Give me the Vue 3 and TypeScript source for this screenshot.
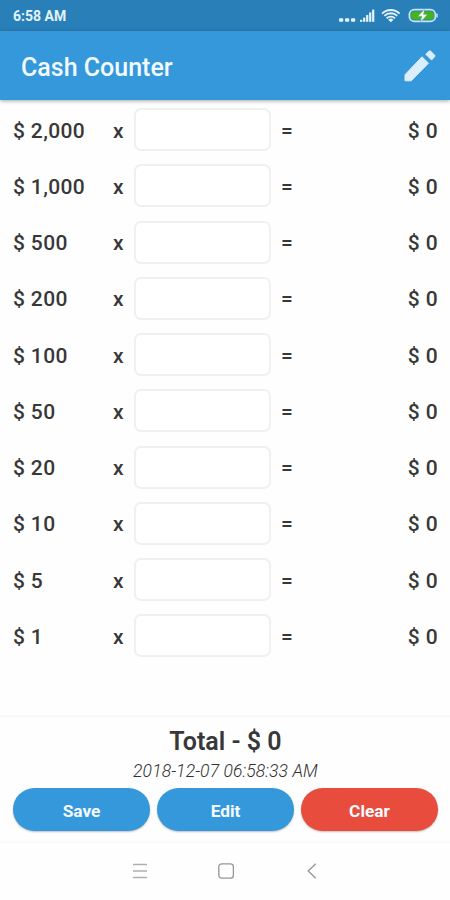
<script setup lang="ts">
import { computed, reactive, ref } from 'vue'

interface Row {
  value: number
  count: string
}

const rows = reactive<Row[]>(
  [2000, 1000, 500, 200, 100, 50, 20, 10, 5, 1].map((value) => ({ value, count: '' })),
)
const stamp = ref('2018-12-07 06:58:33 AM')

const money = (n: number): string => '$ ' + n.toLocaleString('en-US')
const amount = (row: Row): number => row.value * (Number(row.count) || 0)
const total = computed(() => rows.reduce((sum, row) => sum + amount(row), 0))

function clear(): void {
  rows.forEach((row) => {
    row.count = ''
  })
}
</script>

<template>
  <div class="screen">
    <div class="status">
      <span class="clock">6:58 AM</span>
      <svg class="indicators" width="99" height="20" viewBox="0 0 99 20">
        <g fill="#e4f2fb">
          <rect x="0" y="11.2" width="4.2" height="3.6" rx="1" />
          <rect x="6" y="11.2" width="4.2" height="3.6" rx="1" />
          <rect x="12" y="11.2" width="4.2" height="3.6" rx="1" />
          <rect x="21" y="12.8" width="2.3" height="2" />
          <rect x="24.1" y="10.6" width="2.2" height="4.2" />
          <rect x="27.1" y="8" width="2.2" height="6.8" />
          <rect x="30.1" y="5.4" width="2.2" height="9.4" />
          <rect x="33.1" y="2.6" width="2.2" height="12.2" />
          <path d="M49.2 12.8a3.6 3.6 0 0 1 5.2 0l-2.6 2.4z" />
        </g>
        <g fill="none" stroke="#e4f2fb" stroke-width="1.8">
          <path d="M43 6.6a12.5 12.5 0 0 1 17.6 0" />
          <path d="M45.4 8.9a9 9 0 0 1 12.8 0" />
          <path d="M47.6 11.3a6 6 0 0 1 8.4 0" />
        </g>
        <rect x="70.4" y="2.6" width="26" height="11.8" rx="5" fill="none" stroke="#c9e2f1" stroke-width="1.8" />
        <path d="M98 6.5v4" stroke="#c9e2f1" stroke-width="1.4" />
        <rect x="72" y="4.4" width="22.8" height="8.2" rx="3" fill="#45b51c" />
        <path d="M85.5 2.2l-6.5 7h3.8l-1.4 6 6.9-7.6h-3.8z" fill="#fff" stroke="#5fae94" stroke-width=".5" />
      </svg>
    </div>

    <header class="bar">
      <h1>Cash Counter</h1>
      <svg width="32" height="32" viewBox="0 0 32 32" fill="#dcedfb" stroke="#dcedfb" stroke-width="1" stroke-linejoin="round">
        <path d="M1 24.7L18 6.8l6.5 6.4L7.2 30.8H1z" />
        <path d="M21.8 4.3L25.3 1q.7-.5 1.3.1l4.1 4.2q.6.7 0 1.3l-3.1 3.5z" />
      </svg>
    </header>

    <main class="list">
      <div v-for="row in rows" :key="row.value" class="row">
        <span class="note">{{ money(row.value) }}</span>
        <span class="sign">x</span>
        <input v-model="row.count" class="count" inputmode="numeric" />
        <span class="equals">=</span>
        <span class="sum">{{ money(amount(row)) }}</span>
      </div>
    </main>

    <footer class="summary">
      <div class="total">Total - {{ money(total) }}</div>
      <div class="stamp">{{ stamp }}</div>
      <div class="actions">
        <button class="btn">Save</button>
        <button class="btn">Edit</button>
        <button class="btn danger" @click="clear">Clear</button>
      </div>
    </footer>

    <nav class="nav">
      <svg width="16" height="16" viewBox="0 0 16 16" fill="none" stroke="#b0b0b0" stroke-width="1.3">
        <path d="M1 1.5h14M1 8h14M1 14.5h14" />
      </svg>
      <svg width="16" height="16" viewBox="0 0 16 16" fill="none" stroke="#969696" stroke-width="1.3">
        <rect x=".8" y=".8" width="14.6" height="14.4" rx="3" />
      </svg>
      <svg width="16" height="16" viewBox="0 0 16 16" fill="none" stroke="#969696" stroke-width="1.3">
        <path d="M11.7 .8L4.2 8l7.5 7.2" />
      </svg>
    </nav>
  </div>
</template>

<style>
body {
  margin: 0;
  background: #fefefe;
}
</style>

<style scoped>
.screen {
  display: flex;
  flex-direction: column;
  width: 450px;
  height: 900px;
  overflow: hidden;
  background: #fefefe;
  color: #383838;
  font-family: Roboto, 'Liberation Sans', sans-serif;
}
.screen * {
  box-sizing: border-box;
}
.status {
  display: flex;
  flex: none;
  align-items: center;
  justify-content: space-between;
  height: 31px;
  padding: 1px 12px 0 13px;
  background: #2980b9;
}
.clock {
  color: #e4f2fb;
  font-size: 14px;
  font-weight: 700;
  line-height: 30px;
}
.indicators {
  margin-top: 2px;
}
.bar {
  display: flex;
  flex: none;
  align-items: center;
  justify-content: space-between;
  height: 69px;
  padding: 1px 14px 0 21px;
  background: #3498db;
  box-shadow: 0 1px 4px rgba(0, 0, 0, 0.35);
}
h1 {
  margin: 0;
  padding-top: 3px;
  color: #f3faff;
  font-size: 25px;
  font-weight: 500;
  line-height: 30px;
}
.list {
  flex: 1;
  padding-top: 1.5px;
}
.row {
  display: grid;
  grid-template-columns: 100px 21px 137px 44px 1fr;
  align-items: center;
  height: 56.25px;
  padding: 0 12px 0 13px;
  font-size: 21px;
  font-weight: 500;
  line-height: 26px;
  letter-spacing: 0.35px;
}
.row span {
  padding-top: 2px;
}
.count {
  width: 137px;
  height: 43px;
  padding: 0 10px;
  border: 2px solid #eef1f2;
  border-radius: 7px;
  outline: none;
  background: #fff;
  font: inherit;
}
.row .equals {
  padding-left: 10px;
}
.sum {
  text-align: right;
}
.summary {
  flex: none;
  height: 128px;
  padding: 9px 12px 0 13px;
  border-top: 3px solid #f8f9f9;
  border-bottom: 2px solid #f9fafa;
  text-align: center;
}
.total {
  font-size: 25px;
  font-weight: 600;
  line-height: 30px;
}
.stamp {
  margin-top: 1px;
  color: #303030;
  font-size: 17.5px;
  font-style: italic;
  font-weight: 300;
  line-height: 26px;
  letter-spacing: 0.1px;
}
.actions {
  display: grid;
  grid-template-columns: repeat(3, 1fr);
  gap: 7px;
  margin-top: 4px;
}
.btn {
  height: 43px;
  padding: 2px 0 0;
  border: 0;
  border-radius: 22px;
  background: #3498db;
  box-shadow: 0 1px 2px rgba(0, 0, 0, 0.25);
  color: #f4faff;
  font-family: inherit;
  font-size: 17.3px;
  font-weight: 700;
}
.danger {
  background: #e74c3c;
}
.nav {
  display: flex;
  flex: none;
  justify-content: center;
  gap: 70px;
  height: 57px;
  padding: 20px 0 0 2px;
}
</style>
